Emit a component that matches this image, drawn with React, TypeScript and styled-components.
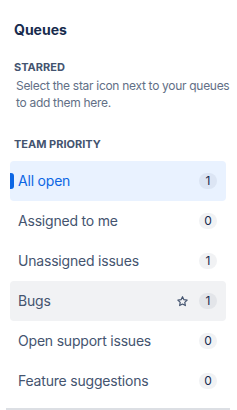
import styled, { createGlobalStyle } from "styled-components";

const GlobalStyle = createGlobalStyle`
  body {
    margin: 0;
    background: #ffffff;
    font-family: Inter, "Noto Sans", sans-serif;
  }
`;

type Queue = {
  name: string;
  count: number;
  selected?: boolean;
  hovered?: boolean;
};

const queues: Queue[] = [
  { name: "All open", count: 1, selected: true },
  { name: "Assigned to me", count: 0 },
  { name: "Unassigned issues", count: 1 },
  { name: "Bugs", count: 1, hovered: true },
  { name: "Open support issues", count: 0 },
  { name: "Feature suggestions", count: 0 },
];

const StarIcon = () => (
  <svg width="13" height="13" viewBox="0 0 24 24" fill="none">
    <path
      d="M12 3.2l2.6 5.5 6 .8-4.4 4.1 1.1 5.9L12 16.6l-5.3 2.9 1.1-5.9-4.4-4.1 6-.8z"
      stroke="#44546F"
      strokeWidth="2.2"
      strokeLinejoin="round"
    />
  </svg>
);

const App = () => {
  return (
    <Sidebar>
      <GlobalStyle />
      <Title>Queues</Title>
      <SectionHeading top={19}>Starred</SectionHeading>
      <Hint>Select the star icon next to your queues to add them here.</Hint>
      <SectionHeading top={25}>Team priority</SectionHeading>
      <List>
        {queues.map((q) => (
          <Row key={q.name} selected={!!q.selected} hovered={!!q.hovered}>
            {q.selected ? <Indicator /> : null}
            <Label selected={!!q.selected}>{q.name}</Label>
            <Actions>
              {q.hovered ? <StarIcon /> : null}
              <Badge>{q.count}</Badge>
            </Actions>
          </Row>
        ))}
      </List>
      <Divider />
    </Sidebar>
  );
};

export default App;

const Sidebar = styled.nav`
  width: 237px;
  height: 410px;
  box-sizing: border-box;
  padding: 20px 11px 0 10px;
  display: flex;
  flex-direction: column;
  overflow: hidden;
`;

const Title = styled.h2`
  margin: 0 0 0 4px;
  font-size: 14px;
  line-height: 20px;
  font-weight: 650;
  color: #172b4d;
`;

const SectionHeading = styled.h3<{ top: number }>`
  margin: ${({ top }) => top}px 0 0 4px;
  font-size: 11px;
  line-height: 16px;
  font-weight: 700;
  text-transform: uppercase;
  color: #44546f;
`;

const Hint = styled.p`
  margin: 2px -8px 0 6px;
  font-size: 12px;
  line-height: 17px;
  letter-spacing: -0.3px;
  color: #626f86;
`;

const List = styled.ul`
  list-style: none;
  margin: 9px 0 0;
  padding: 0;
  display: flex;
  flex-direction: column;
`;

const Row = styled.li<{ selected: boolean; hovered: boolean }>`
  position: relative;
  height: 40px;
  display: flex;
  align-items: center;
  padding: 0 9px 0 8px;
  border-radius: 4px;
  background: ${({ selected, hovered }) =>
    selected ? "#e9f2ff" : hovered ? "#f1f2f4" : "transparent"};
`;

const Indicator = styled.span`
  position: absolute;
  left: 0;
  top: 12px;
  width: 4px;
  height: 16px;
  border-radius: 0 3px 3px 0;
  background: #0c66e4;
`;

const Label = styled.span<{ selected: boolean }>`
  flex: 1;
  font-size: 14px;
  line-height: 20px;
  letter-spacing: -0.2px;
  color: ${({ selected }) => (selected ? "#0c66e4" : "#44546f")};
`;

const Actions = styled.div`
  display: flex;
  align-items: center;
  gap: 10px;
`;

const Badge = styled.span`
  min-width: 18px;
  height: 16px;
  box-sizing: border-box;
  padding: 0 5px;
  border-radius: 8px;
  background: rgba(9, 30, 66, 0.06);
  font-size: 12px;
  line-height: 16px;
  text-align: center;
  color: #172b4d;
`;

const Divider = styled.hr`
  margin: 7px 0 0 -4px;
  width: 224px;
  border: none;
  border-top: 2px solid #dcdfe4;
`;
